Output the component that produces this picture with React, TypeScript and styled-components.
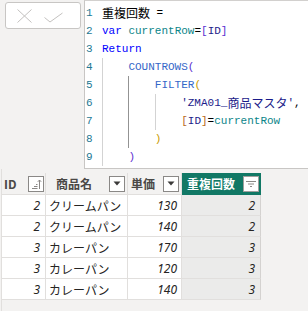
import React from 'react';
import styled, { createGlobalStyle } from 'styled-components';

const Global = createGlobalStyle`
  html, body { margin: 0; padding: 0; background: #f3f2f1; }
  body { width: 308px; height: 311px; overflow: hidden; font-family: "Noto Sans", "Noto Sans CJK JP", sans-serif; }
`;

const Page = styled.div`
  width: 308px;
  height: 311px;
  display: flex;
  flex-direction: column;
  background: #f3f2f1;
  overflow: hidden;
`;

const TopBar = styled.div`
  display: flex;
  height: 169px;
  flex-shrink: 0;
`;

const ActionCol = styled.div`
  width: 84px;
  flex-shrink: 0;
  padding: 2px 0 0 5px;
  box-sizing: border-box;
`;

const ActionBox = styled.div`
  width: 76px;
  height: 27px;
  box-sizing: border-box;
  border: 1px solid #c8c6c4;
  border-radius: 3px;
  background: #fff;
  display: flex;
  align-items: center;
  padding-left: 11px;
  gap: 12px;
`;

const Editor = styled.div`
  flex: 1;
  background: #fff;
  border-left: 1px solid #c8c6c4;
  border-top: 1px solid #d2d0ce;
  border-bottom: 1px solid #c8c6c4;
  padding-top: 3px;
  box-sizing: border-box;
  font-family: "Liberation Mono", monospace;
  font-size: 11px;
  overflow: hidden;
`;

const Line = styled.div`
  display: flex;
  height: 18px;
  line-height: 18px;
  white-space: pre;
`;

const LineNo = styled.div`
  width: 17px;
  flex-shrink: 0;
  padding-left: 1px;
  box-sizing: border-box;
  color: #237893;
`;

const Code = styled.div`
  display: flex;
  align-items: stretch;
`;

const Guide = styled.span<{ $active?: boolean }>`
  display: inline-block;
  width: 4ch;
  height: 18px;
  box-sizing: border-box;
  border-left: 1px solid ${(p) => (p.$active ? '#939393' : '#d3d3d3')};
`;

const Tok = styled.span<{ $c: string }>`
  color: ${(p) => p.$c};
`;

const Jp = styled.span<{ $c: string }>`
  color: ${(p) => p.$c};
  font-family: "Noto Sans CJK JP", sans-serif;
  font-size: 12px;
`;

const C = {
  plain: '#000000',
  kw: '#0000ff',
  fn: '#3467c8',
  v: '#0b8589',
  ref: '#1b1b8a',
  b1: '#5a2fd0',
  b2: '#c99a00',
  b3: '#b8691c',
};

const TableArea = styled.div`
  flex: 1;
  margin-left: 1px;
  padding-top: 4px;
  border-left: 1px solid #e1dfdd;
`;

const Grid = styled.div`
  display: grid;
  grid-template-columns: 44px 82px 54px 79px;
  width: max-content;
`;

const HeadCell = styled.div<{ $sel?: boolean; $pl: number; $pr: number }>`
  height: 22px;
  box-sizing: border-box;
  display: flex;
  align-items: center;
  justify-content: space-between;
  padding: 0 ${(p) => p.$pr}px 0 ${(p) => p.$pl}px;
  background: ${(p) => (p.$sel ? '#117865' : 'transparent')};
  color: ${(p) => (p.$sel ? '#ffffff' : '#4a4846')};
  border-right: 1px solid ${(p) => (p.$sel ? '#117865' : '#e1dfdd')};
  border-bottom: 1px solid ${(p) => (p.$sel ? '#117865' : '#e1dfdd')};
  font-family: "Noto Sans CJK JP", "Noto Sans", sans-serif;
  font-size: 12px;
  font-weight: 700;
`;

const HeadLabel = styled.span`
  line-height: 16px;
`;

const IconBox = styled.span<{ $light?: boolean }>`
  width: 16px;
  height: 16px;
  box-sizing: border-box;
  border: 1px solid ${(p) => (p.$light ? '#a19f9d' : '#8a8886')};
  background: #fff;
  display: flex;
  align-items: center;
  justify-content: center;
  flex-shrink: 0;
`;

const Cell = styled.div<{ $right?: boolean; $sel?: boolean; $num?: boolean; $pad: number }>`
  height: 21px;
  box-sizing: border-box;
  display: flex;
  align-items: center;
  justify-content: ${(p) => (p.$right ? 'flex-end' : 'flex-start')};
  padding: ${(p) => (p.$right ? `0 ${p.$pad}px 0 0` : `0 0 0 ${p.$pad}px`)};
  background: ${(p) => (p.$sel ? '#ebebea' : '#ffffff')};
  border-right: 1px solid ${(p) => (p.$sel ? '#d4d2d0' : '#e1dfdd')};
  border-bottom: 1px solid #e1dfdd;
  color: #252423;
  font-family: ${(p) => (p.$num ? '"Noto Sans", sans-serif' : '"Noto Sans CJK JP", sans-serif')};
  font-style: ${(p) => (p.$num ? 'italic' : 'normal')};
  font-size: 12px;
`;

const XIcon = () => (
  <svg width="15" height="14" viewBox="0 0 15 14">
    <path d="M0.5 0.5 L14.5 13.5 M14.5 0.5 L0.5 13.5" stroke="#c3c1bf" strokeWidth="1" fill="none" />
  </svg>
);

const CheckIcon = () => (
  <svg width="19" height="14" viewBox="0 0 19 14">
    <path d="M0.5 8.5 L6 13 L18.5 4" stroke="#c3c1bf" strokeWidth="1" fill="none" />
  </svg>
);

const SortIcon = () => (
  <svg width="14" height="14" viewBox="0 0 14 14">
    <path d="M3 11.5 H8.5 M5 9.5 H8.5 M7 7.5 H8.5" stroke="#8a8886" strokeWidth="1" fill="none" />
    <path d="M10.5 12 V3 M8.8 4.8 L10.5 3 L12.2 4.8" stroke="#8a8886" strokeWidth="1" fill="none" />
  </svg>
);

const DropIcon = () => (
  <svg width="8" height="5" viewBox="0 0 8 5">
    <path d="M0.5 0.5 H7.5 L4 4.5 Z" fill="#3b3a39" />
  </svg>
);

const FilterIcon = () => (
  <svg width="12" height="10" viewBox="0 0 12 10">
    <path d="M1 2.5 H11 M3 5 H9 M5 7.5 H7" stroke="#8a8886" strokeWidth="1" fill="none" />
  </svg>
);

type Piece = { t: string; c: string; jp?: boolean };

const lines: { guides: boolean[]; parts: Piece[] }[] = [
  { guides: [], parts: [{ t: '重複回数', c: C.plain, jp: true }, { t: ' =', c: C.plain }] },
  {
    guides: [],
    parts: [
      { t: 'var', c: C.kw },
      { t: ' ', c: C.plain },
      { t: 'currentRow', c: C.v },
      { t: '=', c: C.plain },
      { t: '[', c: C.b1 },
      { t: 'ID', c: C.ref },
      { t: ']', c: C.b1 },
    ],
  },
  { guides: [], parts: [{ t: 'Return', c: C.kw }] },
  { guides: [false], parts: [{ t: 'COUNTROWS', c: C.fn }, { t: '(', c: C.b1 }] },
  { guides: [false, true], parts: [{ t: 'FILTER', c: C.fn }, { t: '(', c: C.b2 }] },
  {
    guides: [false, true, false],
    parts: [
      { t: "'ZMA01_", c: C.ref },
      { t: '商品マスタ', c: C.ref, jp: true },
      { t: "'", c: C.ref },
      { t: ',', c: C.plain },
    ],
  },
  {
    guides: [false, true, false],
    parts: [
      { t: '[', c: C.b3 },
      { t: 'ID', c: C.ref },
      { t: ']', c: C.b3 },
      { t: '=', c: C.plain },
      { t: 'currentRow', c: C.v },
    ],
  },
  { guides: [false, true], parts: [{ t: ')', c: C.b2 }] },
  { guides: [false], parts: [{ t: ')', c: C.b1 }] },
];

const rows = [
  { id: 2, name: 'クリームパン', price: 130, dup: 2 },
  { id: 2, name: 'クリームパン', price: 140, dup: 2 },
  { id: 3, name: 'カレーパン', price: 170, dup: 3 },
  { id: 3, name: 'カレーパン', price: 120, dup: 3 },
  { id: 3, name: 'カレーパン', price: 140, dup: 3 },
];

export default function App() {
  return (
    <Page>
      <Global />
      <TopBar>
        <ActionCol>
          <ActionBox>
            <XIcon />
            <CheckIcon />
          </ActionBox>
        </ActionCol>
        <Editor>
          {lines.map((ln, i) => (
            <Line key={i}>
              <LineNo>{i + 1}</LineNo>
              <Code>
                {ln.guides.map((g, j) => (
                  <Guide key={j} $active={g} />
                ))}
                {ln.parts.map((p, k) =>
                  p.jp ? (
                    <Jp key={k} $c={p.c}>
                      {p.t}
                    </Jp>
                  ) : (
                    <Tok key={k} $c={p.c}>
                      {p.t}
                    </Tok>
                  )
                )}
              </Code>
            </Line>
          ))}
        </Editor>
      </TopBar>
      <TableArea>
        <Grid>
          <HeadCell $pl={2} $pr={1}>
            <HeadLabel>ID</HeadLabel>
            <IconBox>
              <SortIcon />
            </IconBox>
          </HeadCell>
          <HeadCell $pl={10} $pr={2}>
            <HeadLabel>商品名</HeadLabel>
            <IconBox>
              <DropIcon />
            </IconBox>
          </HeadCell>
          <HeadCell $pl={3} $pr={2}>
            <HeadLabel>単価</HeadLabel>
            <IconBox>
              <DropIcon />
            </IconBox>
          </HeadCell>
          <HeadCell $sel $pl={5} $pr={1}>
            <HeadLabel>重複回数</HeadLabel>
            <IconBox $light>
              <FilterIcon />
            </IconBox>
          </HeadCell>
          {rows.map((r, i) => (
            <React.Fragment key={i}>
              <Cell $right $num $pad={5}>
                {r.id}
              </Cell>
              <Cell $pad={3}>{r.name}</Cell>
              <Cell $right $num $pad={4}>
                {r.price}
              </Cell>
              <Cell $right $num $sel $pad={5}>
                {r.dup}
              </Cell>
            </React.Fragment>
          ))}
        </Grid>
      </TableArea>
    </Page>
  );
}
